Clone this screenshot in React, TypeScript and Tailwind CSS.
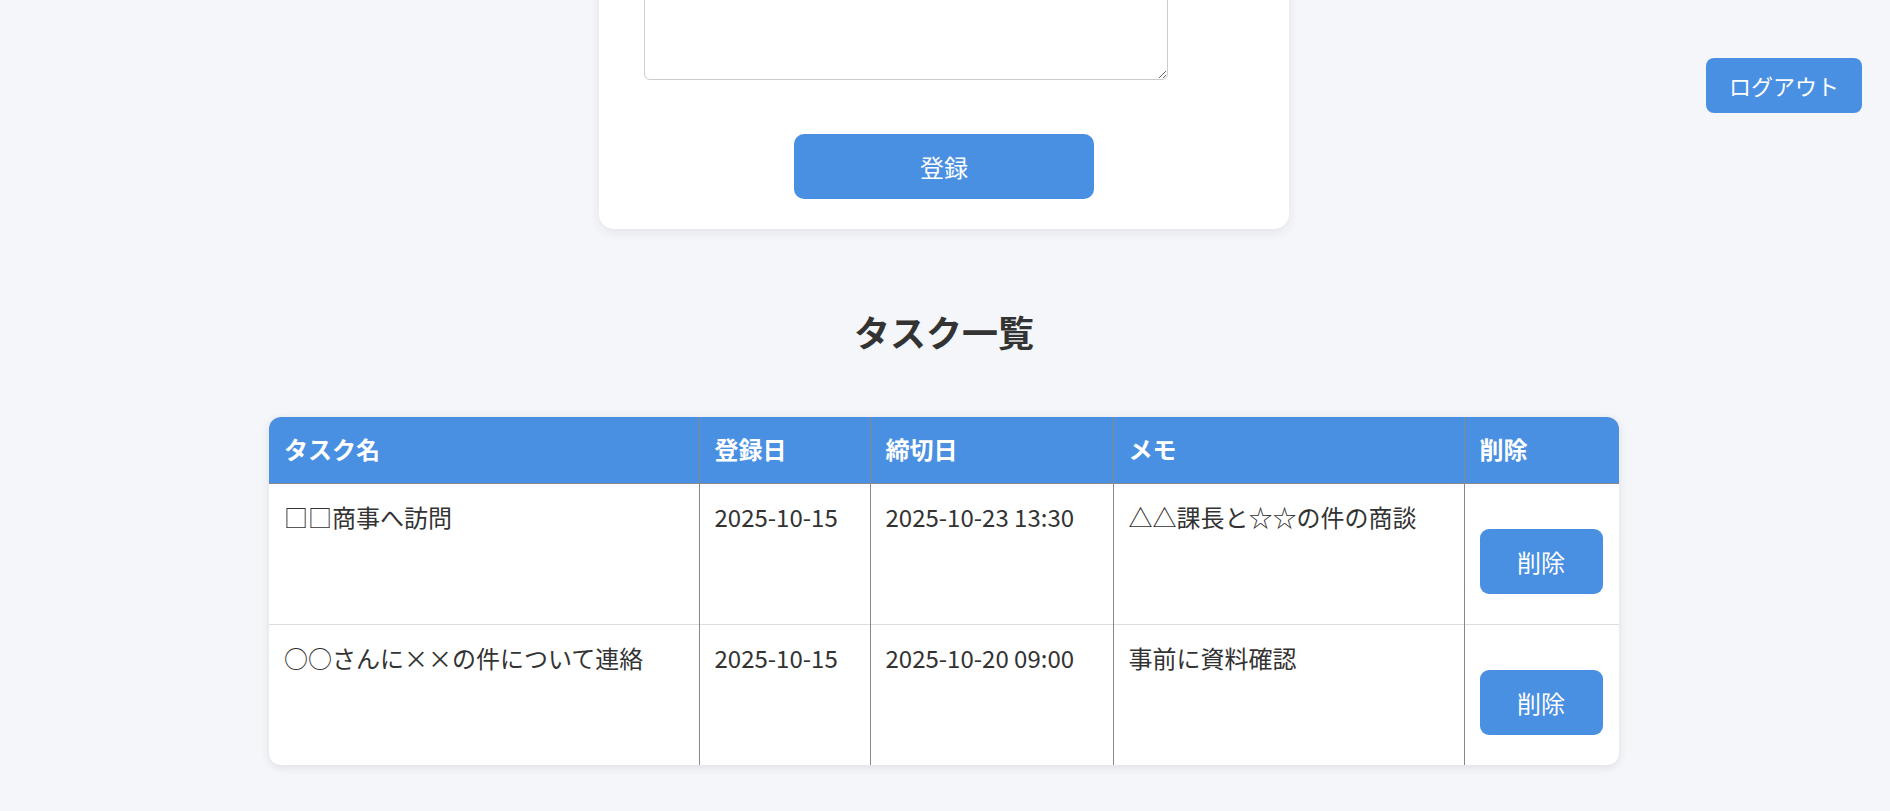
import React from "react";

const tasks = [
  { name: "□□商事へ訪問", created: "2025-10-15", due: "2025-10-23 13:30", memo: "△△課長と☆☆の件の商談" },
  { name: "○○さんに××の件について連絡", created: "2025-10-15", due: "2025-10-20 09:00", memo: "事前に資料確認" },
];

export default function App() {
  return (
    <div
      className="relative min-h-[811px] w-full bg-[#f4f6f9] text-[#333] overflow-hidden"
      style={{ fontFamily: '"Noto Sans CJK JP", "Noto Sans", sans-serif' }}
    >
      <button className="absolute top-[58px] right-[28px] flex h-[55px] w-[156px] items-center justify-center rounded-[8px] bg-[#4a90e2] text-[22px] text-white">
        ログアウト
      </button>

      <div className="flex flex-col items-center pr-[2px]">
        <div className="-mt-[87px] flex w-[690px] flex-col rounded-[15px] bg-white px-[45px] pt-[45px] pb-[30px] shadow-[0_3px_12px_rgba(0,0,0,0.08)]">
          <textarea
            placeholder="メモ"
            className="block h-[122px] w-[524px] resize-y rounded-[6px] border border-[#ccc] px-[12px] pt-[8px] text-[21px] placeholder:text-[#bbb] outline-none"
          />
          <div className="mt-[54px] flex justify-center">
            <button className="flex h-[65px] w-[300px] items-center justify-center rounded-[10px] bg-[#4a90e2] text-[24px] text-white">
              登録
            </button>
          </div>
        </div>

        <h2 className="mt-[76px] mb-[60px] text-[36px] font-bold leading-[52px] text-[#333]">タスク一覧</h2>

        <div className="w-[1350px] overflow-hidden rounded-[12px] bg-white shadow-[0_2px_10px_rgba(0,0,0,0.1)]">
          <table className="w-full table-fixed border-collapse text-[24px]">
            <colgroup>
              <col className="w-[430px]" />
              <col className="w-[171px]" />
              <col className="w-[243px]" />
              <col className="w-[351px]" />
              <col className="w-[155px]" />
            </colgroup>
            <thead>
              <tr className="bg-[#4a90e2] text-white border-b border-[#888]">
                <th className="border-r border-[#888] px-[15px] pt-[14px] pb-[16px] text-left font-bold leading-normal">タスク名</th>
                <th className="border-r border-[#888] px-[15px] pt-[14px] pb-[16px] text-left font-bold leading-normal">登録日</th>
                <th className="border-r border-[#888] px-[15px] pt-[14px] pb-[16px] text-left font-bold leading-normal">締切日</th>
                <th className="border-r border-[#888] px-[15px] pt-[14px] pb-[16px] text-left font-bold leading-normal">メモ</th>
                <th className="px-[15px] pt-[14px] pb-[16px] text-left font-bold leading-normal">削除</th>
              </tr>
            </thead>
            <tbody>
              {tasks.map((t, i) => (
                <tr key={i} className={i < tasks.length - 1 ? "border-b border-[#ddd]" : ""}>
                  <td className="border-r border-[#888] px-[15px] py-[15px] align-top leading-normal">{t.name}</td>
                  <td className="border-r border-[#888] px-[15px] py-[15px] align-top leading-normal">{t.created}</td>
                  <td className="border-r border-[#888] px-[15px] py-[15px] align-top leading-normal">{t.due}</td>
                  <td className="border-r border-[#888] px-[15px] py-[15px] align-top leading-normal">{t.memo}</td>
                  <td className="px-[15px] py-[15px] align-top">
                    <button className="mt-[30px] mb-[15px] flex h-[65px] w-[123px] items-center justify-center rounded-[9px] bg-[#4a90e2] text-[24px] leading-normal text-white">
                      削除
                    </button>
                  </td>
                </tr>
              ))}
            </tbody>
          </table>
        </div>
        <div className="h-[40px]" />
      </div>
    </div>
  );
}
